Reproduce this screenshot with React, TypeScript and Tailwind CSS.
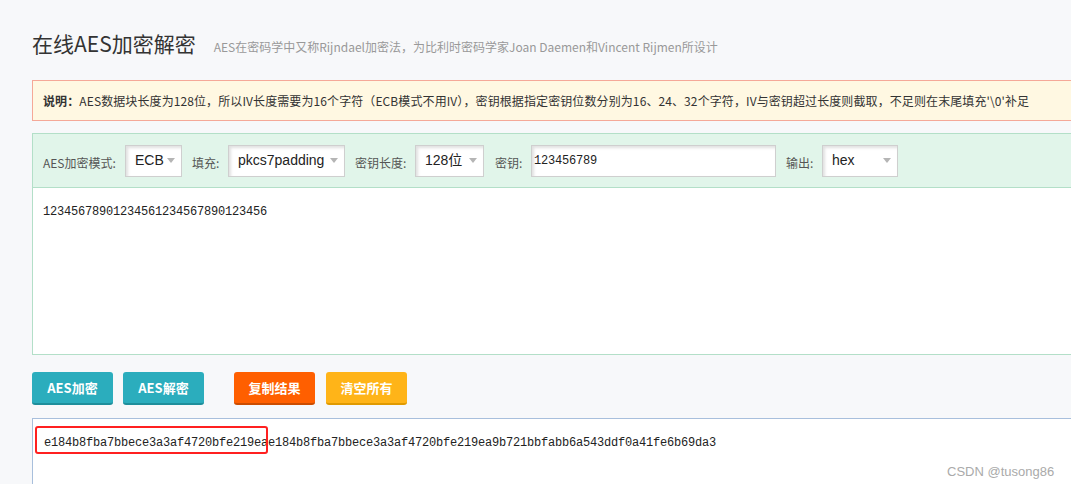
import React from "react";

const Arrow = () => (
  <svg width="8" height="5" viewBox="0 0 8 5" className="shrink-0">
    <path d="M0 0 L8 0 L4 5 Z" fill="#b5b5b5" />
  </svg>
);

const FakeSelect = ({ value, width }: { value: string; width: string }) => (
  <div
    className={`${width} flex h-8 items-center justify-between border border-[#cfcfcf] bg-white pl-[9px] pr-[6px] shadow-[inset_2px_2px_3px_rgba(0,0,0,0.12)] font-['Liberation_Sans','Noto_Sans_CJK_SC',sans-serif] text-[14px] text-[#222]`}
  >
    <span>{value}</span>
    <Arrow />
  </div>
);

const Label = ({ children }: { children: React.ReactNode }) => (
  <span className="text-[12px] text-[#555]">{children}</span>
);

const ActionButton = ({ children, color }: { children: React.ReactNode; color: string }) => (
  <button
    className={`${color} h-[33px] w-[81px] rounded-[3px] border-b-2 text-[13px] font-bold text-white`}
  >
    {children}
  </button>
);

export default function App() {
  return (
    <div className="relative h-[484px] w-full overflow-hidden bg-[#f7f8fa] font-['Noto_Sans_CJK_SC',sans-serif]">
      <div className="w-[1120px] pl-8 pt-[30px]">
        {/* title */}
        <div className="flex h-[30px] items-center">
          <h1 className="-mt-[4px] text-[21px] leading-[30px] text-[#333]">在线AES加密解密</h1>
          <span className="ml-[18px] mt-[4px] text-[12px] text-[#999]">
            AES在密码学中又称Rijndael加密法，为比利时密码学家Joan Daemen和Vincent Rijmen所设计
          </span>
        </div>

        {/* notice */}
        <div className="mt-[20px] flex h-[41px] items-center border border-[#f5a898] bg-[#fff8e2] pl-[10px] text-[12px] tracking-[0.1px] text-[#333]">
          <b>说明：</b>
          <span>
            AES数据块长度为128位，所以IV长度需要为16个字符（ECB模式不用IV），密钥根据指定密钥位数分别为16、24、32个字符，IV与密钥超过长度则截取，不足则在末尾填充'\0'补足
          </span>
        </div>

        {/* options + input */}
        <div className="mt-[12px] border border-[#b3dfc8] bg-white">
          <div className="flex h-[54px] items-center border-b border-[#b3dfc8] bg-[#e1f5ea] pl-[10px]">
            <div className="w-[76px]">
              <Label>AES加密模式:</Label>
            </div>
            <div className="ml-[6px]">
              <FakeSelect value="ECB" width="w-[57px]" />
            </div>
            <div className="ml-[10px] w-[28px]">
              <Label>填充:</Label>
            </div>
            <div className="ml-[8px]">
              <FakeSelect value="pkcs7padding" width="w-[117px]" />
            </div>
            <div className="ml-[10px] w-[52px]">
              <Label>密钥长度:</Label>
            </div>
            <div className="ml-[8px]">
              <FakeSelect value="128位" width="w-[69px]" />
            </div>
            <div className="ml-[11px] w-[28px]">
              <Label>密钥:</Label>
            </div>
            <div className="ml-[8px] flex h-8 w-[245px] items-center border border-[#cfcfcf] bg-white pl-[2px] shadow-[inset_2px_2px_3px_rgba(0,0,0,0.12)] font-['Liberation_Mono',monospace] text-[12px] tracking-[-0.2px] text-[#222]">
              123456789
            </div>
            <div className="ml-[10px] w-[28px]">
              <Label>输出:</Label>
            </div>
            <div className="ml-[8px]">
              <FakeSelect value="hex" width="w-[76px]" />
            </div>
          </div>
          <div className="h-[166px] pl-[10px] pt-[14px] font-['Liberation_Mono',monospace] text-[12px] leading-[20px] tracking-[-0.2px] text-[#222]">
            12345678901234561234567890123456
          </div>
        </div>

        {/* buttons */}
        <div className="mt-[17px] flex items-center">
          <ActionButton color="bg-[#2badbd] border-[#1e8e9b]">AES加密</ActionButton>
          <div className="ml-[10px]">
            <ActionButton color="bg-[#2badbd] border-[#1e8e9b]">AES解密</ActionButton>
          </div>
          <div className="ml-[30px]">
            <ActionButton color="bg-[#ff5f00] border-[#cc4c00]">复制结果</ActionButton>
          </div>
          <div className="ml-[11px]">
            <ActionButton color="bg-[#ffb418] border-[#e09a00]">清空所有</ActionButton>
          </div>
        </div>

        {/* output */}
        <div className="relative mt-[13px] h-[100px] border border-[#a8bfdc] bg-white pl-[11px] pt-[14px] font-['Liberation_Mono',monospace] text-[12px] leading-[20px] tracking-[-0.2px] text-[#222]">
          e184b8fba7bbece3a3af4720bfe219eae184b8fba7bbece3a3af4720bfe219ea9b721bbfabb6a543ddf0a41fe6b69da3
          <div className="absolute left-[2px] top-[7px] h-[28px] w-[233px] rounded-[3px] border-2 border-[#ff2020]" />
        </div>
      </div>

      <span className="absolute left-[947px] top-[462px] font-['Liberation_Sans',sans-serif] text-[13px] text-[#aaa]">
        CSDN @tusong86
      </span>
    </div>
  );
}
